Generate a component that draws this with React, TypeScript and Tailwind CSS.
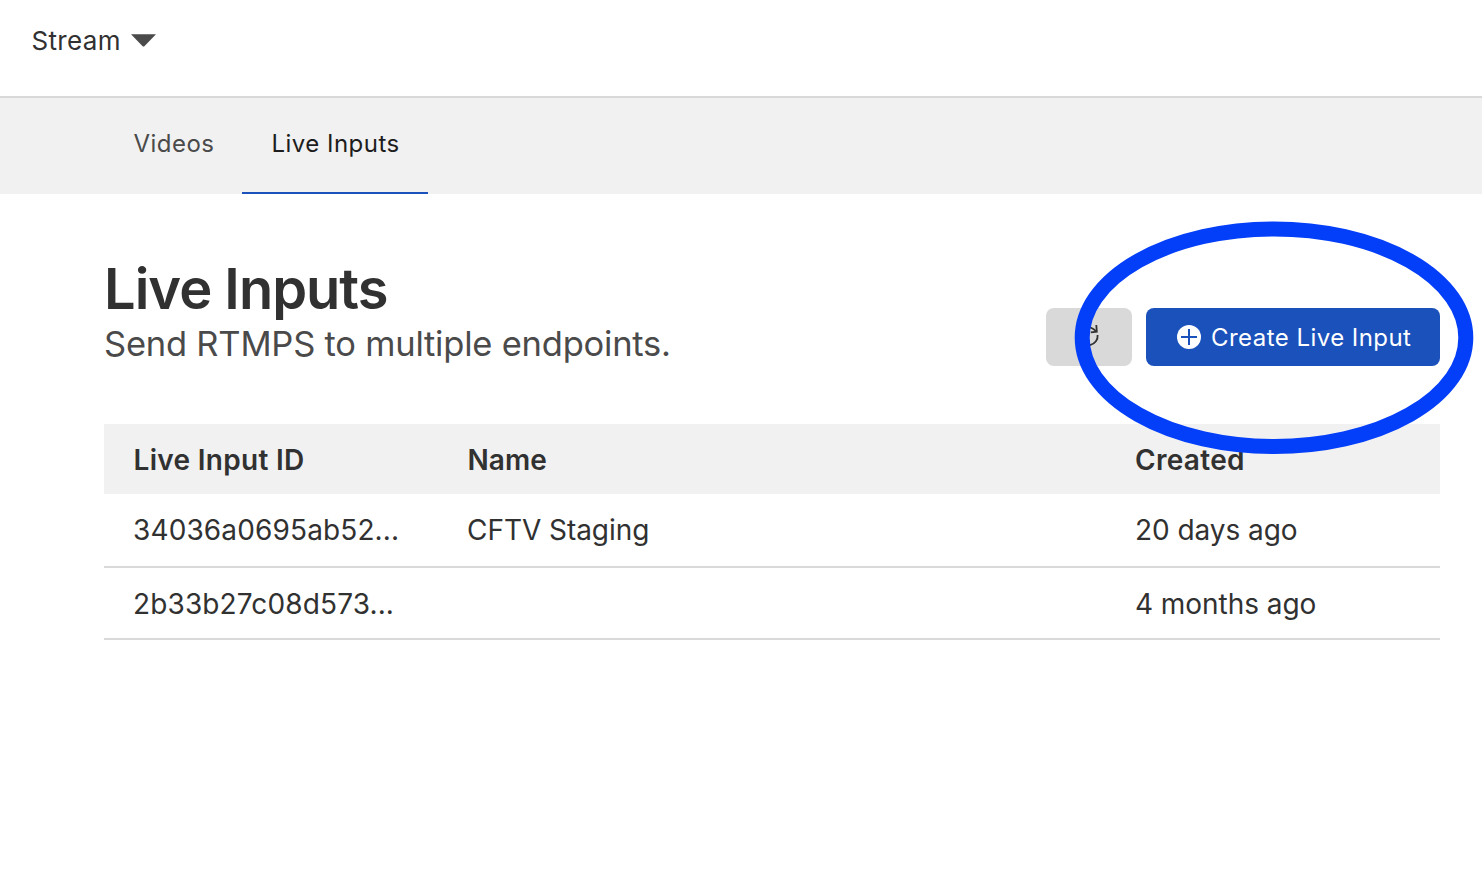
import React from "react";

type LiveInput = { id: string; name: string; created: string };

const inputs: LiveInput[] = [
  { id: "34036a0695ab52...", name: "CFTV Staging", created: "20 days ago" },
  { id: "2b33b27c08d573...", name: "", created: "4 months ago" },
];

function RefreshIcon() {
  return (
    <svg width="26" height="26" viewBox="0 0 26 26" fill="none" stroke="#313131" strokeWidth="1.8">
      <path d="M21.6 11 A8.9 9 0 1 1 9.5 3.6 Q14.5 1.8 20.2 7.4" />
      <path d="M20.3 1 L20.8 7.7 L14.8 8.3" />
    </svg>
  );
}

function PlusCircleIcon() {
  return (
    <svg width="24" height="24" viewBox="0 0 24 24" className="shrink-0">
      <circle cx="12" cy="12" r="12" fill="#fff" />
      <path d="M12 4v16M4 12h16" stroke="#1b51bb" strokeWidth="2" />
    </svg>
  );
}

export default function App() {
  return (
    <div className="relative h-[890px] w-[1482px] overflow-hidden bg-white font-[Inter,sans-serif] text-[#313131]">
      <header className="flex h-[98px] items-start border-b-2 border-[#d9d9d9] pl-[31.5px] pt-[23px]">
        <button className="flex items-center gap-2.5 text-[26px] leading-9">
          <span className="tracking-[0.32px]">Stream</span>
          <svg width="25" height="13" viewBox="0 0 25 13" className="-mt-px">
            <path d="M0 0.3H25L13.6 11.9Q12.5 13 11.4 11.9Z" fill="#4a4a4a" />
          </svg>
        </button>
      </header>

      <nav className="flex h-24 bg-[#f1f1f1] pl-[104px] text-[24px] leading-9 tracking-[0.47px]">
        <a className="w-[138px] pl-[29.5px] pt-7 text-[#4a4a4a]">Videos</a>
        <a className="w-[186px] border-b-2 border-[#1b51bb] pl-[29.5px] pt-7 text-[#1d1d1d]">Live Inputs</a>
      </nav>

      <main className="pl-[104px] pr-[42px]">
        <div className="flex h-[230px] justify-between">
          <div className="pt-[60px]">
            <h1 className="text-[56px] font-semibold leading-[70px] tracking-[-1px]">Live Inputs</h1>
            <p className="text-[34.5px] leading-[39px] tracking-[-0.22px] text-[#4a4a4a]">Send RTMPS to multiple endpoints.</p>
          </div>
          <div className="flex gap-3.5 pt-[114px]">
            <button className="flex h-[58px] w-[86px] items-center justify-center rounded-lg bg-[#d9d9d9]">
              <RefreshIcon />
            </button>
            <button className="flex h-[58px] w-[294px] items-center gap-2.5 rounded-lg bg-[#1b51bb] pl-[31px] text-[24px] tracking-[0.45px] text-white">
              <PlusCircleIcon />
              <span className="whitespace-nowrap pt-0.5">Create Live Input</span>
            </button>
          </div>
        </div>

        <div className="text-[28px] leading-9">
          <div className="grid h-[70px] grid-cols-[334px_668px_334px] items-center bg-[#f1f1f1] pt-0.5 font-semibold tracking-[0.3px]">
            <span className="pl-[29.5px]">Live Input ID</span>
            <span className="pl-[29.5px] tracking-[0.1px]">Name</span>
            <span className="pl-[29px]">Created</span>
          </div>
          {inputs.map((row) => (
            <div
              key={row.id}
              className="grid h-[74px] grid-cols-[334px_668px_334px] items-center border-b-2 border-[#d9d9d9] last:h-[72px] last:pt-px"
            >
              <span className="pl-[29px] tracking-[0.13px]">{row.id}</span>
              <span className="pl-[29px] tracking-[-0.05px]">{row.name}</span>
              <span className="pl-[29px] tracking-[-0.05px]">{row.created}</span>
            </div>
          ))}
        </div>
      </main>

      <svg width="400" height="234" viewBox="0 0 400 234" className="pointer-events-none absolute left-[1074px] top-[221px]" fill="none">
        <ellipse cx="200" cy="116.7" rx="191.8" ry="108.8" stroke="#033ef9" strokeWidth="15" />
      </svg>
    </div>
  );
}
